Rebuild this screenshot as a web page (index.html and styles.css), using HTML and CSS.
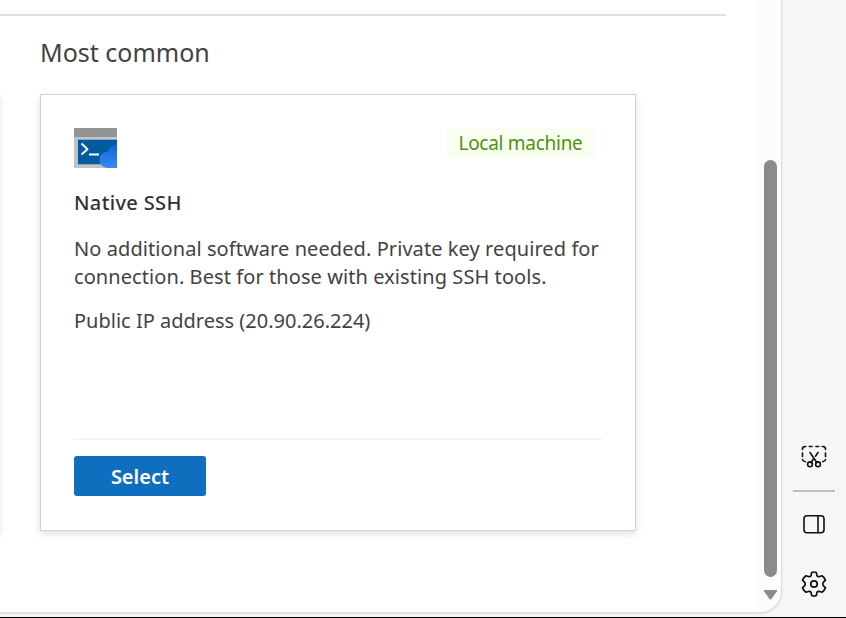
FILE: index.html
```
<!DOCTYPE html>
<html lang="en">
<head>
<meta charset="utf-8">
<title>Connect</title>
<link rel="stylesheet" href="styles.css">
</head>
<body>
<div class="window">
  <div class="page">
    <div class="previous-card"></div>
    <main class="content">
      <div class="rule"></div>
      <h2 class="heading">Most common</h2>
      <section class="card">
        <div class="card-top">
          <svg class="ssh-icon" width="43" height="40" viewBox="0 0 43 40">
            <defs>
              <linearGradient id="cloud" x1="0" y1="0" x2="0" y2="1">
                <stop offset="0" stop-color="#0f62d8"/><stop offset="1" stop-color="#3a8cf0"/>
              </linearGradient>
            </defs>
            <path fill="#c3c3c3" d="M0 8h43v32H0z"/>
            <path fill="#949494" d="M0 0h43v9H0z"/>
            <path fill="#005ba1" stroke="#e0e3e6" stroke-width=".6" d="M3.500 11.300H44v25.400H3.500z"/>
            <path fill="none" stroke="#fff" stroke-width="1.900" stroke-linejoin="round" d="M7.500 15.500l6 5.700-6 5.300M15 26.500h10"/>
            <path fill="url(#cloud)" d="M43 16.200c-4.800.3-7.500 3-9.200 7.200-4.800.1-8.300 3.400-8.300 8.100 0 4.900 3.500 8.500 9 8.500H43z"/>
          </svg>
          <span class="badge">Local machine</span>
        </div>
        <h3 class="title">Native SSH</h3>
        <p class="text">No additional software needed. Private key required for<br>connection. Best for those with existing SSH tools.</p>
        <p class="text address">Public IP address (20.90.26.224)</p>
        <div class="card-footer"><button class="select">Select</button></div>
      </section>
    </main>
    <div class="scrollbar">
      <div class="thumb"></div>
      <svg class="arrow" width="15" height="12" viewBox="0 0 15 12"><path fill="#8b8b8b" d="M1.500 1h12q1 .3.500 1.200L8.500 10q-1 1.200-2 0L1 2.200Q.5 1.300 1.500 1z"/></svg>
    </div>
  </div>
  <aside class="sidebar">
    <svg class="tool" width="28" height="28" viewBox="0 0 28 28" fill="none" stroke="#111" stroke-width="1.600" stroke-linecap="round">
      <path d="M2.500 6.500V6q0-2.500 2.800-2.500h.5M9.300 3.500h2.700M16 3.500h2.700M22.200 3.500h.5q2.800 0 2.800 2.500v.5M2.500 10v3.500M25.500 10v3.500M2.500 16.500q.2 1.700 2.800 2.200M25.500 16.500q-.2 1.700-2.800 2.200"/>
      <path d="M10 9.500l7 10.200M18 9.500l-2.500 3.700M13.500 16l-2.500 3.700"/>
      <circle cx="10" cy="21.300" r="2.400"/><circle cx="18" cy="21.300" r="2.400"/>
    </svg>
    <div class="divider"></div>
    <svg class="tool panel-icon" width="28" height="28" viewBox="0 0 28 28" fill="none" stroke="#111" stroke-width="1.600">
      <rect x="4" y="5.700" width="20" height="17" rx="3"/><path d="M18 6v17"/>
    </svg>
    <svg class="tool gear-icon" width="28" height="28" viewBox="0 0 28 28" fill="none" stroke="#111" stroke-width="1.700" stroke-linejoin="round">
      <path d="M11.700 2.500Q14 1.500 16.300 2.500L17 5.800Q17.700 6.800 18.900 6.700L22 5.800Q24.300 7.400 25.500 10.200L23.100 12.700Q22.400 14 23.100 15.300L25.500 17.800Q24.300 20.600 22 22.200L18.900 21.300Q17.700 21.200 17 22.200L16.300 25.500Q14 26.500 11.700 25.500L11 22.200Q10.300 21.200 9.100 21.300L6 22.200Q3.700 20.600 2.500 17.800L4.900 15.300Q5.600 14 4.900 12.700L2.500 10.200Q3.700 7.400 6 5.800L9.100 6.700Q10.300 6.800 11 5.800Z"/>
      <circle cx="14" cy="14" r="3.200"/>
    </svg>
  </aside>
</div>
</body>
</html>
```
FILE: styles.css
```
* { box-sizing: border-box; }
body { margin: 0; font-family: "Noto Sans", "Open Sans", sans-serif; color: #323130; }
h2, h3, p { margin: 0; font-weight: 400; white-space: nowrap; }
svg { display: block; }
.window { display: flex; width: 846px; height: 618px; overflow: hidden; background: #f6f6f6; border-bottom: 1px solid #000; }
.page { display: flex; width: 782px; height: 613px; background: #fff; border: solid #dcdcdc; border-width: 0 1px 1px 0; border-radius: 0 0 22px 0; overflow: hidden; box-shadow: 0 1px 2px #0000001a; }
.previous-card { width: 10px; height: 436px; margin: 95px 0 0 -10px; box-shadow: 0 3px 7px #0000001c; }
.content { width: 759px; }
.rule { width: 726px; height: 2px; margin-top: 14px; background: #e1e1e1; }
.heading { margin: 21px 0 0 40px; height: 32px; font-size: 25px; line-height: 31px; color: #434241; }
.card { display: flex; flex-direction: column; width: 596px; height: 437px; margin: 25px 0 0 40px; padding: 33px 33px 34px; border: 1px solid #d2d2d2; box-shadow: 0 3px 7px #00000021; }
.card-top { display: flex; justify-content: space-between; height: 40px; }
.badge { width: 147px; height: 30px; margin-right: 8px; text-align: center; background: #f8fff0; color: #529010; font-size: 19px; line-height: 31px; letter-spacing: -.28px; white-space: nowrap; }
.title { margin-top: 21px; height: 28px; font-size: 20px; line-height: 28px; font-weight: 500; letter-spacing: .35px; }
.text { margin-top: 18px; font-size: 20px; line-height: 28px; letter-spacing: .075px; color: #434241; }
.address { margin-top: 16px; letter-spacing: 0; }
.card-footer { width: 528px; margin-top: auto; padding-top: 16px; border-top: 2px solid #f5f5f5; }
.select { display: block; width: 132px; height: 40px; padding: 0; border: 0; border-radius: 3px; background: #106ebe; color: #fff; font: 600 20px/42px "Noto Sans", sans-serif; }
.scrollbar { display: flex; flex-direction: column; align-items: center; width: 22px; background: #fcfcfc; }
.thumb { width: 13px; height: 417px; margin-top: 160px; border-radius: 7px; background: #8b8b8b; }
.arrow { margin-top: 12px; }
.sidebar { display: flex; flex-direction: column; align-items: center; width: 64px; padding-top: 443px; }
.divider { width: 42px; height: 2px; margin-top: 19px; background: #bfbfbf; }
.panel-icon { margin-top: 18px; }
.gear-icon { margin-top: 32px; }
```
